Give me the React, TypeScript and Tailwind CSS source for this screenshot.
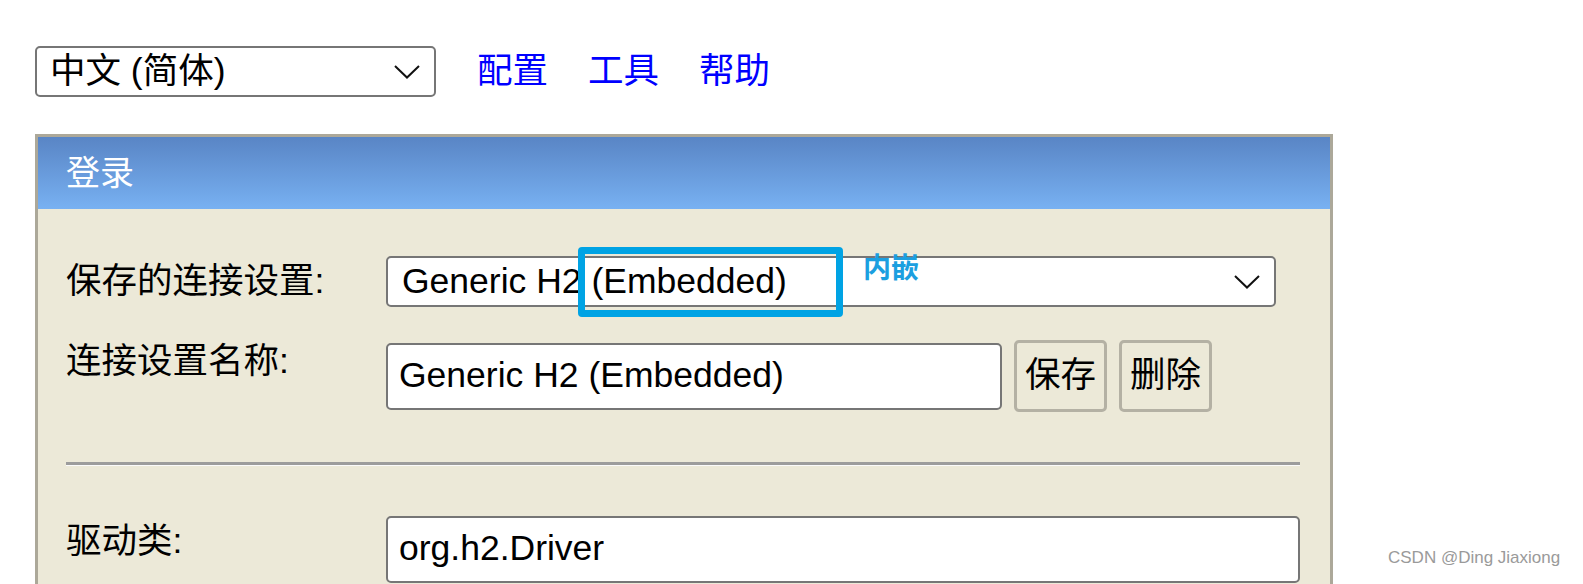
import React from "react";

const font = { fontFamily: '"Liberation Sans", Arial, "Noto Sans CJK SC", sans-serif' };

function Chevron() {
    return (
        <svg width="26" height="14" viewBox="0 0 26 14" fill="none">
            <polyline points="1,1 13,12.5 25,1" stroke="#111" strokeWidth="2" />
        </svg>
    );
}

function FakeSelect({ value, className }: { value: string; className: string }) {
    return (
        <div className={`flex items-center justify-between bg-white border-2 border-[#767676] rounded-[5px] ${className}`}>
            <span className="whitespace-nowrap">{value}</span>
            <Chevron />
        </div>
    );
}

function Button({ label }: { label: string }) {
    return (
        <div className="w-[93px] h-[72px] flex items-center justify-center border-[3px] border-[#b4b1a4] rounded-[5px] bg-[#ece9d8]">
            {label}
        </div>
    );
}

export default function App() {
    return (
        <div className="relative w-[1583px] h-[584px] overflow-hidden bg-white text-black text-[35.5px]" style={font}>
            <div className="pt-[45px] pl-[35px]">
                {/* language + menu */}
                <div className="flex items-center">
                    <FakeSelect value="中文 (简体)" className="w-[401px] h-[51px] pl-[13px] pr-[14px]" />
                    <div className="flex gap-[40px] ml-[41px] text-[#0000ff]">
                        <span>配置</span>
                        <span>工具</span>
                        <span>帮助</span>
                    </div>
                </div>

                {/* login panel */}
                <div className="mt-[36px] w-[1298px] border-[3px] border-b-0 border-[#aca899] bg-[#ece9d8]">
                    <div className="h-[72px] flex items-center pl-[28px] text-white text-[34px] bg-gradient-to-b from-[#5985c5] to-[#78b1f2]">
                        登录
                    </div>
                    <div className="pt-[46px] pl-[28px] pr-[29px] h-[400px]">
                        <div className="flex items-center">
                            <div className="w-[320px]">保存的连接设置:</div>
                            <div className="relative">
                                <FakeSelect value="Generic H2 (Embedded)" className="w-[890px] h-[51px] pl-[14px] pr-[14px]" />
                                <div className="absolute left-[192px] top-[-9px] w-[265px] h-[70px] border-[7px] border-[#00a3e4] rounded-[4px]" />
                                <div className="absolute left-[477px] top-[-4px] text-[28px] leading-none font-bold text-[#1b9fe0]" style={{ fontFamily: '"Noto Sans CJK SC", sans-serif' }}>
                                    内嵌
                                </div>
                            </div>
                        </div>

                        <div className="flex items-start mt-[31px]">
                            <div className="w-[320px] leading-[42px]">连接设置名称:</div>
                            <div className="w-[616px] h-[67px] mt-[3px] flex items-center pl-[11px] bg-white border-2 border-[#767676] rounded-[5px]">
                                Generic H2 (Embedded)
                            </div>
                            <div className="flex gap-[12px] ml-[12px]">
                                <Button label="保存" />
                                <Button label="删除" />
                            </div>
                        </div>

                        <div className="mt-[50px] w-[1234px] border-t-[3px] border-t-[#9c9c9c] border-b border-b-[#fafafa]" />

                        <div className="flex items-start mt-[50px]">
                            <div className="w-[320px] leading-[42px] mt-[4px]">驱动类:</div>
                            <div className="w-[914px] h-[67px] flex items-center pl-[11px] bg-white border-2 border-[#767676] rounded-[5px]">
                                org.h2.Driver
                            </div>
                        </div>
                    </div>
                </div>
            </div>

            <div className="absolute left-[1388px] top-[545px] text-[17px] text-[#9a9a9a]" style={{ fontFamily: '"Liberation Sans", Arial, sans-serif' }}>
                CSDN @Ding Jiaxiong
            </div>
        </div>
    );
}
